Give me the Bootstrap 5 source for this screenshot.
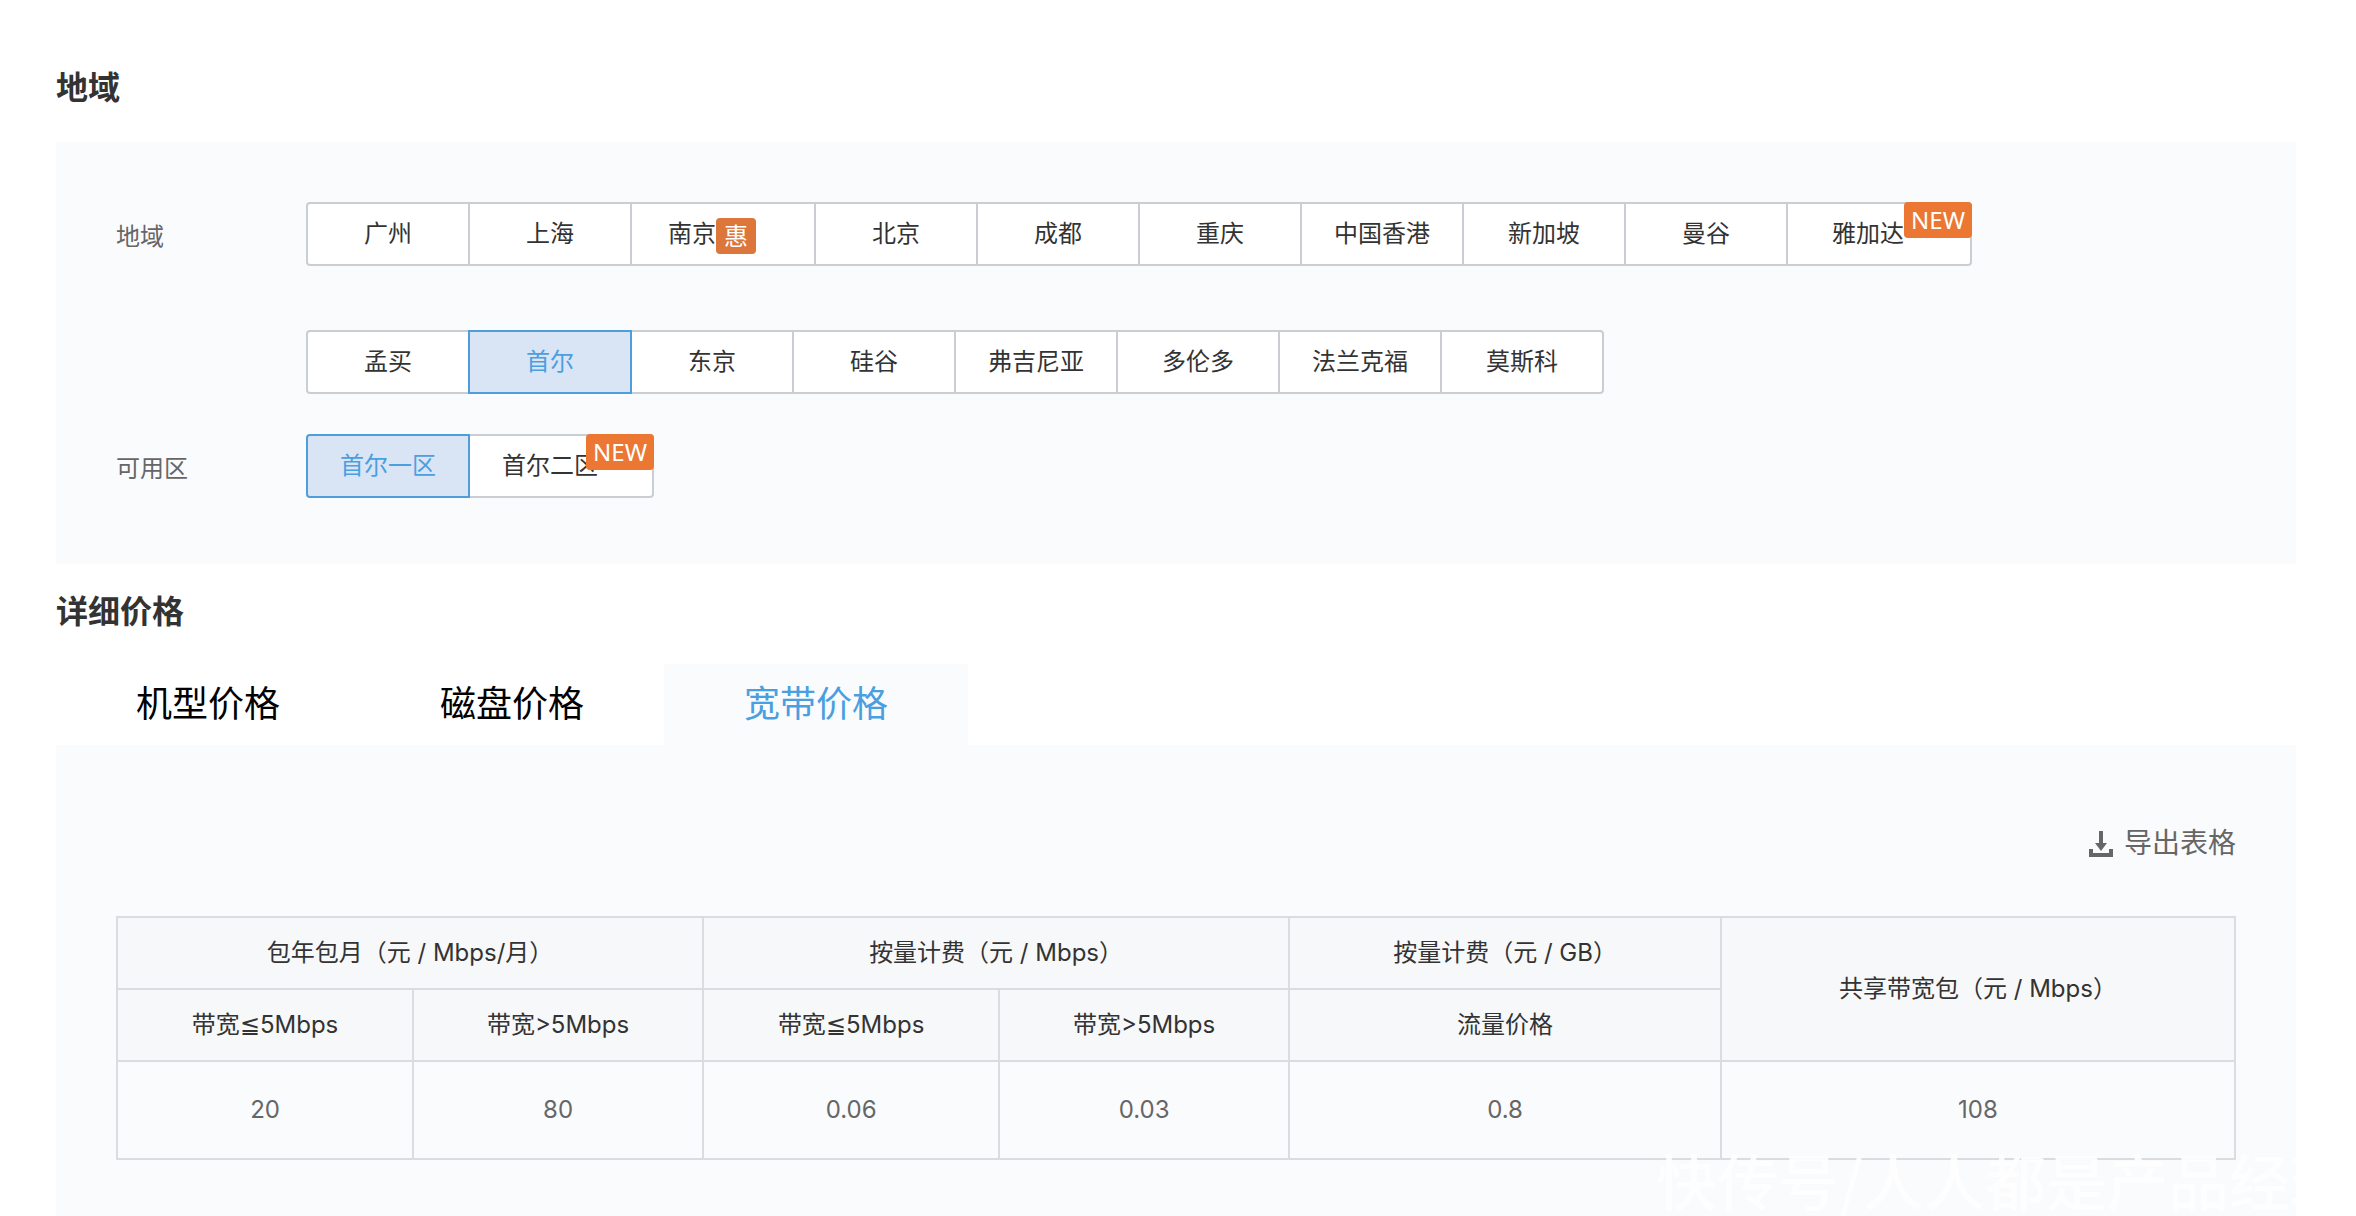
<!DOCTYPE html>
<html lang="zh-CN">
<head>
<meta charset="utf-8">
<meta name="viewport" content="width=device-width, initial-scale=1">
<title>详细价格</title>
<link href="https://cdn.jsdelivr.net/npm/bootstrap@5.3.0/dist/css/bootstrap.min.css" rel="stylesheet">
<style>
  body { font-family: Inter, "Noto Sans CJK SC", sans-serif; font-size: 24px; line-height: 36px; color: #333; background: #fff; }
  .page { padding: 64px 60px 0 56px; }
  .section-title { font-size: 32px; line-height: 48px; font-weight: 700; margin: 0 0 30px; }
  .section-title-next { margin: 24px 0 28px; }
  .panel { background: #fafbfd; padding: 60px 60px 66px; }
  .field-label { width: 190px; color: #666; padding-top: 17px; }
  .picker-rows { gap: 64px; }
  .zone-row { margin-top: 40px; }
  .picker .btn {
    --bs-btn-font-size: 24px; --bs-btn-line-height: 36px; --bs-btn-padding-y: 12px; --bs-btn-padding-x: 20px;
    --bs-btn-color: #333; --bs-btn-bg: #fff; --bs-btn-border-color: #cacdd2; --bs-btn-border-width: 2px; --bs-btn-border-radius: 4px;
    --bs-btn-hover-color: #4a9fe0; --bs-btn-hover-bg: #fff; --bs-btn-hover-border-color: #cacdd2;
    --bs-btn-active-color: #4a9fe0; --bs-btn-active-bg: #d9e5f5; --bs-btn-active-border-color: #4f9edb;
    flex: 0 0 auto; min-width: 164px; height: 64px; padding: 12px 20px;
  }
  .picker .btn + .btn { margin-left: -2px !important; }
  .picker .btn.has-tag { min-width: 186px; padding-right: 42px; }
  .tag { font-family: "Noto Sans", "Noto Sans CJK SC", sans-serif; background: #eb7733; color: #fff; border-radius: 4px; line-height: 36px; height: 36px; }
  .tag-sale { background: #dc763a; width: 40px; margin-top: 2px; }
  .tag-new { position: absolute; top: -2px; right: -2px; width: 68px; }
  .price-tabs .nav-link { padding: 13px 80px 14px; font-size: 36px; line-height: 54px; color: #000; border-radius: 0; }
  .price-tabs .nav-link.active { background: #fafbfd; color: #4a9fe0; }
  .price-panel { padding: 78px 60px 40px; }
  .export-row { margin-bottom: 53px; }
  .export { font-size: 28px; line-height: 40px; color: #666; gap: 11px; }
  .price-table { --bs-table-bg: transparent; --bs-table-color: #666; font-family: Inter, "DejaVu Sans", "Noto Sans CJK SC", sans-serif; table-layout: fixed; border-color: #dbdcdf; text-align: center; }
  .price-table > :not(caption) > * > * { border: 2px solid #dbdcdf; padding: 17px 8px; font-weight: 400; vertical-align: middle; }
  .price-table > thead > tr > th { background: #f7f8fa; color: #333; }
  .price-table > tbody > tr > td { padding: 30px 8px; }
  .col-a { width: 13.98%; }
  .col-b { width: 13.69%; }
  .col-c { width: 20.39%; }
  .watermark { position: absolute; right: 5px; bottom: 0; font: 500 61px/72px "Noto Sans CJK SC", sans-serif; color: #fff; opacity: .9; white-space: nowrap; pointer-events: none; }
</style>
</head>
<body>
<main class="page position-relative overflow-hidden min-vh-100 d-flex flex-column">
  <h2 class="section-title">地域</h2>
  <section class="panel">
    <div class="d-flex">
      <div class="field-label flex-shrink-0" id="regionLabel">地域</div>
      <div class="d-flex flex-column align-items-start picker picker-rows" role="group" aria-labelledby="regionLabel">
        <div class="btn-group">
          <button type="button" class="btn">广州</button>
          <button type="button" class="btn">上海</button>
          <button type="button" class="btn has-tag"><span class="d-flex justify-content-center">南京<span class="tag tag-sale">惠</span></span></button>
          <button type="button" class="btn">北京</button>
          <button type="button" class="btn">成都</button>
          <button type="button" class="btn">重庆</button>
          <button type="button" class="btn">中国香港</button>
          <button type="button" class="btn">新加坡</button>
          <button type="button" class="btn">曼谷</button>
          <button type="button" class="btn has-tag">雅加达<span class="tag tag-new">NEW</span></button>
        </div>
        <div class="btn-group">
          <button type="button" class="btn">孟买</button>
          <button type="button" class="btn active" aria-pressed="true">首尔</button>
          <button type="button" class="btn">东京</button>
          <button type="button" class="btn">硅谷</button>
          <button type="button" class="btn">弗吉尼亚</button>
          <button type="button" class="btn">多伦多</button>
          <button type="button" class="btn">法兰克福</button>
          <button type="button" class="btn">莫斯科</button>
        </div>
      </div>
    </div>
    <div class="d-flex zone-row">
      <div class="field-label flex-shrink-0" id="zoneLabel">可用区</div>
      <div class="btn-group picker" role="group" aria-labelledby="zoneLabel">
        <button type="button" class="btn active" aria-pressed="true">首尔一区</button>
        <button type="button" class="btn has-tag">首尔二区<span class="tag tag-new">NEW</span></button>
      </div>
    </div>
  </section>

  <h2 class="section-title section-title-next">详细价格</h2>
  <nav class="nav price-tabs">
    <a class="nav-link" href="#">机型价格</a>
    <a class="nav-link" href="#">磁盘价格</a>
    <a class="nav-link active" href="#" aria-current="page">宽带价格</a>
  </nav>
  <section class="panel price-panel flex-grow-1">
    <div class="d-flex justify-content-end export-row">
      <a href="#" class="export d-flex align-items-center text-decoration-none">
        <svg width="24" height="32" viewBox="0 0 24 32" fill="#666" aria-hidden="true"><path d="M10 4h4v12h4l-6 8-6-8h4zM0 22h4v4h16v-4h4v8H0z"/></svg>
        <span>导出表格</span>
      </a>
    </div>
    <table class="table price-table mb-0">
      <colgroup>
        <col class="col-a"><col class="col-b"><col class="col-a"><col class="col-b"><col class="col-c"><col>
      </colgroup>
      <thead>
        <tr><th colspan="2">包年包月（元 / Mbps/月）</th><th colspan="2">按量计费（元 / Mbps）</th><th>按量计费（元 / GB）</th><th rowspan="2">共享带宽包（元 / Mbps）</th></tr>
        <tr><th>带宽≦5Mbps</th><th>带宽&gt;5Mbps</th><th>带宽≦5Mbps</th><th>带宽&gt;5Mbps</th><th>流量价格</th></tr>
      </thead>
      <tbody>
        <tr><td>20</td><td>80</td><td>0.06</td><td>0.03</td><td>0.8</td><td>108</td></tr>
      </tbody>
    </table>
  </section>
  <div class="watermark">快传号/人人都是产品经理</div>
</main>
<script src="https://cdn.jsdelivr.net/npm/bootstrap@5.3.0/dist/js/bootstrap.bundle.min.js"></script>
</body>
</html>
